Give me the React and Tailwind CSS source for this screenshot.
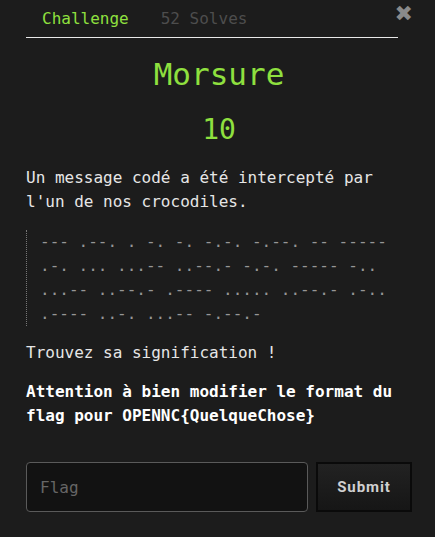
import { useState } from 'react';

const MORSE = [
  '--- .--. . -. -. -.-. -.--. -- -----',
  '.-. ... ...-- ..--.- -.-. ----- -..',
  '...-- ..--.- .---- ..... ..--.- .-..',
  '.---- ..-. ...-- -.--.-',
];

export default function App() {
  const [flag, setFlag] = useState('');

  return (
    <div className="w-[435px] h-[537px] overflow-hidden bg-[#1c1c1c] font-['DejaVu_Sans_Mono',monospace] text-[16px] leading-6 text-[#e6e6e6] relative">
      {/* close */}
      <button className="absolute right-[22px] top-[3px] text-[#8a8a8a] text-[22px] font-bold leading-none font-['DejaVu_Sans',sans-serif]">
        ✖
      </button>

      <div className="pl-[26px] w-[412px] pt-[7px]">
        {/* tabs */}
        <div className="flex w-[372px] border-b border-[#e8e8e8]">
          <span className="px-4 pb-[6px] text-[#8fe03f]">Challenge</span>
          <span className="px-4 pb-[6px] text-[#4d4d4d]">52 Solves</span>
        </div>

        <h2 className="mt-[16px] text-center text-[31px] leading-[40px] text-[#8fe03f]">Morsure</h2>
        <h3 className="mt-[18px] text-center text-[28px] leading-[36px] text-[#8fe03f]">10</h3>

        <p className="mt-[18px]">
          Un message codé a été intercepté par l'un de nos crocodiles.
        </p>

        <pre className="mt-[16px] border-l border-dotted border-[#777] pl-[13px] font-['DejaVu_Sans_Mono',monospace] text-[16px] leading-[24px] text-[#969696]">
          {MORSE.join('\n')}
        </pre>

        <p className="mt-[15px]">Trouvez sa signification !</p>

        <p className="mt-[15px] font-bold text-white">
          Attention à bien modifier le format du flag pour OPENNC{'{'}QuelqueChose{'}'}
        </p>

        <form className="mt-[34px] flex gap-2 w-[386px]" onSubmit={(e) => e.preventDefault()}>
          <input
            value={flag}
            onChange={(e) => setFlag(e.target.value)}
            placeholder="Flag"
            className="w-[282px] h-[50px] rounded-[4px] border border-[#5a5a5a] bg-[#121212] px-[13px] text-[16px] text-[#ddd] placeholder:text-[#666] outline-none font-['DejaVu_Sans_Mono',monospace]"
          />
          <button
            type="submit"
            className="w-[96px] h-[50px] border-2 border-[#0a0a0a] bg-gradient-to-b from-[#222] to-[#161616] text-[#d0d0d0] font-['Roboto',sans-serif] font-bold text-[15px] tracking-[0.06em]"
          >
            Submit
          </button>
        </form>
      </div>
    </div>
  );
}
